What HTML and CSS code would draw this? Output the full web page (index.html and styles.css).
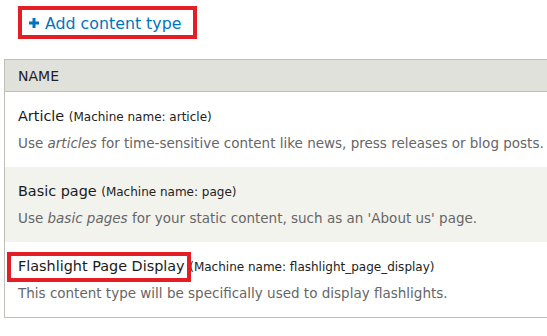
FILE: index.html
```html
<!DOCTYPE html>
<html>
<head>
<meta charset="utf-8">
<link rel="stylesheet" href="styles.css">
</head>
<body>
<div class="actions">
  <a class="action-link" href="#">
    <svg class="plus" width="10" height="10" viewBox="0 0 10 10"><path d="M3.5 0h3v3.5H10v3H6.5V10h-3V6.5H0v-3h3.5z" fill="#0074bd"/></svg>
    <span>Add content type</span>
  </a>
</div>
<table class="types">
  <thead>
    <tr><th>NAME</th></tr>
  </thead>
  <tbody>
    <tr class="odd">
      <td>
        <div class="title"><span class="label">Article</span> <small>(Machine name: article)</small></div>
        <div class="desc">Use <em>articles</em> for time-sensitive content like news, press releases or blog posts.</div>
      </td>
    </tr>
    <tr class="even">
      <td>
        <div class="title"><span class="label">Basic page</span> <small>(Machine name: page)</small></div>
        <div class="desc">Use <em>basic pages</em> for your static content, such as an 'About us' page.</div>
      </td>
    </tr>
    <tr class="odd">
      <td>
        <div class="title"><span class="label marked">Flashlight Page Display</span> <small>(Machine name: flashlight_page_display)</small></div>
        <div class="desc">This content type will be specifically used to display flashlights.</div>
      </td>
    </tr>
  </tbody>
</table>
</body>
</html>
```
FILE: styles.css
```css
html, body {
  margin: 0;
  padding: 0;
  background: #fff;
  font-family: "DejaVu Sans", "Open Sans", sans-serif;
  color: #333;
}
.actions {
  padding: 6px 0 0 18px;
}
.action-link {
  display: inline-flex;
  align-items: center;
  box-sizing: border-box;
  width: 179px;
  height: 33px;
  border: 4px solid #e31e24;
  padding-left: 7px;
  padding-top: 1px;
  color: #0074bd;
  text-decoration: none;
  font-size: 15.8px;
}
.plus {
  margin-right: 6px;
  flex: none;
}
.types {
  margin: 20px 0 0 4px;
  width: 580px;
  border-collapse: collapse;
}
.types th {
  background: #e1e1db;
  border: 1px solid #bfbfb9;
  border-right: 0;
  height: 30px;
  padding: 1px 0 0 13px;
  text-align: left;
  font-weight: normal;
  font-size: 14px;
  color: #222;
}
.types td {
  border-left: 1px solid #bfbfb9;
  padding: 14px 0 0 13px;
  height: 61px;
  vertical-align: top;
}
.types tbody tr:last-child td {
  border-bottom: 1px solid #bfbfb9;
}
.even td {
  background: #f3f3ee;
}
.title {
  font-size: 14.4px;
  color: #1a1a1a;
  line-height: 20px;
  white-space: nowrap;
}
.title small {
  font-size: 12px;
  color: #222;
}
.label {
  position: relative;
}
.marked::after {
  content: "";
  position: absolute;
  left: -11px;
  right: -6px;
  top: -6px;
  bottom: -8px;
  border: 4px solid #e31e24;
}
.desc {
  margin-top: 6px;
  font-size: 13.5px;
  color: #666;
  line-height: 20px;
  white-space: nowrap;
}
```
